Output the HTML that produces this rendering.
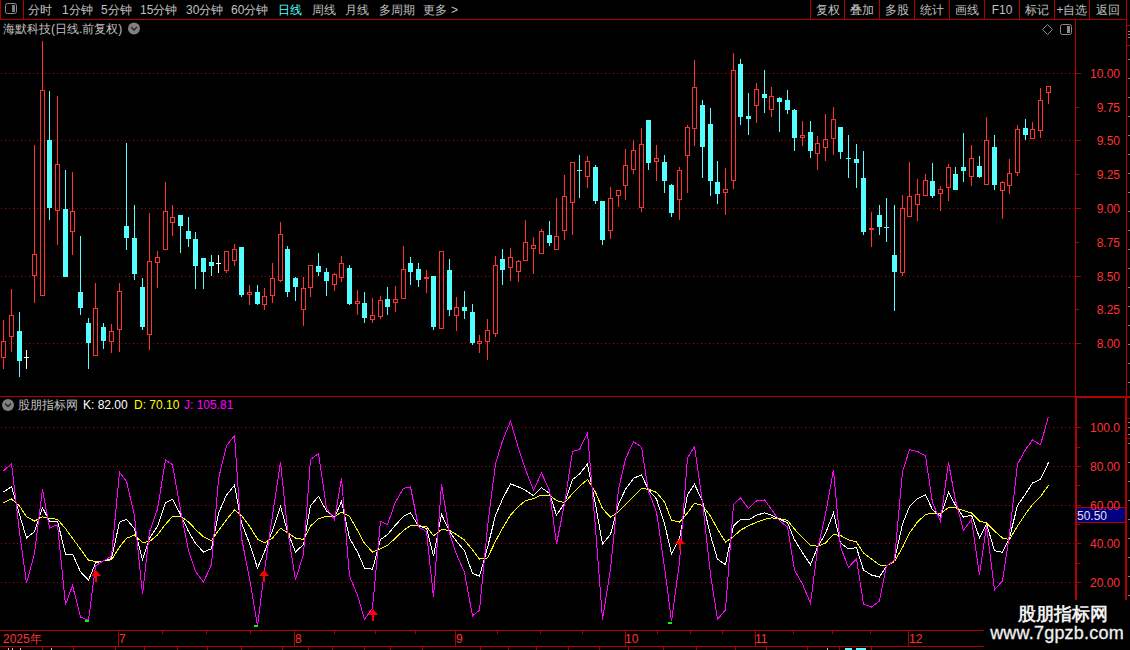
<!DOCTYPE html>
<html><head><meta charset="utf-8">
<style>
html,body{margin:0;padding:0;background:#000;width:1130px;height:650px;overflow:hidden;}
svg{display:block;}
#wm{position:absolute;left:984px;top:600px;width:146px;height:50px;background:#000;}
#wm .a{position:absolute;left:6px;top:2px;width:146px;text-align:center;font:bold 18px "Liberation Sans",sans-serif;color:#f0f0f0;}
#wm .b{position:absolute;left:0;top:23px;letter-spacing:0.2px;width:146px;text-align:center;font:18px "Liberation Sans",sans-serif;color:#f0f0f0;-webkit-text-stroke:0.3px #f0f0f0;}
</style></head>
<body>
<svg width="1130" height="650" viewBox="0 0 1130 650" shape-rendering="crispEdges">
<rect x="0" y="0" width="1130" height="650" fill="#000"/>
<rect x="0" y="19" width="1126" height="1" fill="#b00000"/>
<rect x="0" y="0" width="1" height="19" fill="#b00000"/>
<rect x="23" y="0" width="1" height="19" fill="#b00000"/>
<rect x="810" y="0" width="1" height="19" fill="#b00000"/>
<rect x="844" y="0" width="1" height="19" fill="#b00000"/>
<rect x="879" y="0" width="1" height="19" fill="#b00000"/>
<rect x="914" y="0" width="1" height="19" fill="#b00000"/>
<rect x="949" y="0" width="1" height="19" fill="#b00000"/>
<rect x="984" y="0" width="1" height="19" fill="#b00000"/>
<rect x="1019" y="0" width="1" height="19" fill="#b00000"/>
<rect x="1054" y="0" width="1" height="19" fill="#b00000"/>
<rect x="1089" y="0" width="1" height="19" fill="#b00000"/>
<rect x="1126" y="0" width="1" height="650" fill="#b00000"/>
<rect x="1125" y="397" width="1" height="203" fill="#b00000"/>
<rect x="1075" y="19" width="1" height="377" fill="#b00000"/>
<rect x="1075" y="396" width="2" height="234" fill="#b00000"/>
<rect x="0" y="396" width="1126" height="1" fill="#b00000"/>
<rect x="1076" y="397" width="54" height="1" fill="#b00000"/>
<rect x="1126" y="396" width="4" height="1" fill="#b00000"/>
<rect x="1127" y="418" width="3" height="1" fill="#b00000"/>
<rect x="1127" y="438" width="3" height="1" fill="#b00000"/>
<rect x="1127" y="25" width="3" height="1" fill="#b00000"/>
<rect x="1127" y="45" width="3" height="1" fill="#b00000"/>
<rect x="0" y="630" width="984" height="1" fill="#b00000"/>
<rect x="0" y="646" width="984" height="1" fill="#b00000"/>
<rect x="118" y="630" width="1" height="16" fill="#b00000"/>
<rect x="294" y="630" width="1" height="16" fill="#b00000"/>
<rect x="455" y="630" width="1" height="16" fill="#b00000"/>
<rect x="625" y="630" width="1" height="16" fill="#b00000"/>
<rect x="755" y="630" width="1" height="16" fill="#b00000"/>
<rect x="908" y="630" width="1" height="16" fill="#b00000"/>
<rect x="162" y="631" width="1" height="3" fill="#b00000"/>
<rect x="206" y="631" width="1" height="3" fill="#b00000"/>
<rect x="250" y="631" width="1" height="3" fill="#b00000"/>
<rect x="334" y="631" width="1" height="3" fill="#b00000"/>
<rect x="375" y="631" width="1" height="3" fill="#b00000"/>
<rect x="415" y="631" width="1" height="3" fill="#b00000"/>
<rect x="497" y="631" width="1" height="3" fill="#b00000"/>
<rect x="540" y="631" width="1" height="3" fill="#b00000"/>
<rect x="582" y="631" width="1" height="3" fill="#b00000"/>
<rect x="657" y="631" width="1" height="3" fill="#b00000"/>
<rect x="690" y="631" width="1" height="3" fill="#b00000"/>
<rect x="722" y="631" width="1" height="3" fill="#b00000"/>
<rect x="793" y="631" width="1" height="3" fill="#b00000"/>
<rect x="832" y="631" width="1" height="3" fill="#b00000"/>
<rect x="870" y="631" width="1" height="3" fill="#b00000"/>
<rect x="42" y="647" width="1" height="3" fill="#b00000"/>
<rect x="73" y="647" width="1" height="3" fill="#b00000"/>
<rect x="115" y="647" width="1" height="3" fill="#b00000"/>
<rect x="144" y="647" width="1" height="3" fill="#b00000"/>
<rect x="177" y="647" width="1" height="3" fill="#b00000"/>
<rect x="207" y="647" width="1" height="3" fill="#b00000"/>
<rect x="241" y="647" width="1" height="3" fill="#b00000"/>
<rect x="282" y="647" width="1" height="3" fill="#b00000"/>
<rect x="308" y="647" width="1" height="3" fill="#b00000"/>
<rect x="332" y="647" width="1" height="3" fill="#b00000"/>
<rect x="364" y="647" width="1" height="3" fill="#b00000"/>
<rect x="390" y="647" width="1" height="3" fill="#b00000"/>
<rect x="422" y="647" width="1" height="3" fill="#b00000"/>
<rect x="480" y="647" width="1" height="3" fill="#b00000"/>
<rect x="508" y="647" width="1" height="3" fill="#b00000"/>
<rect x="536" y="647" width="1" height="3" fill="#b00000"/>
<rect x="568" y="647" width="1" height="3" fill="#b00000"/>
<rect x="599" y="647" width="1" height="3" fill="#b00000"/>
<rect x="628" y="647" width="1" height="3" fill="#b00000"/>
<rect x="663" y="647" width="1" height="3" fill="#b00000"/>
<rect x="696" y="647" width="1" height="3" fill="#b00000"/>
<rect x="735" y="647" width="1" height="3" fill="#b00000"/>
<rect x="766" y="647" width="1" height="3" fill="#b00000"/>
<rect x="807" y="647" width="1" height="3" fill="#b00000"/>
<rect x="839" y="647" width="1" height="3" fill="#b00000"/>
<rect x="871" y="647" width="1" height="3" fill="#b00000"/>
<rect x="845" y="648" width="7" height="2" fill="#54ffff"/>
<rect x="856" y="648" width="10" height="2" fill="#54ffff"/>
<rect x="827" y="648" width="1" height="2" fill="#c0c0c0"/>
<rect x="8" y="648" width="1" height="2" fill="#c0c0c0"/>
<rect x="12" y="648" width="1" height="2" fill="#c0c0c0"/>
<rect x="20" y="648" width="1" height="2" fill="#c0c0c0"/>
<rect x="51" y="648" width="1" height="2" fill="#c0c0c0"/>
<line x1="1" y1="73.5" x2="1074" y2="73.5" stroke="#b40000" stroke-width="1" stroke-dasharray="1 3"/>
<rect x="1076" y="73" width="5" height="1" fill="#b00000"/>
<line x1="1" y1="140.5" x2="1074" y2="140.5" stroke="#b40000" stroke-width="1" stroke-dasharray="1 3"/>
<rect x="1076" y="140" width="5" height="1" fill="#b00000"/>
<line x1="1" y1="208.5" x2="1074" y2="208.5" stroke="#b40000" stroke-width="1" stroke-dasharray="1 3"/>
<rect x="1076" y="208" width="5" height="1" fill="#b00000"/>
<line x1="1" y1="276.5" x2="1074" y2="276.5" stroke="#b40000" stroke-width="1" stroke-dasharray="1 3"/>
<rect x="1076" y="276" width="5" height="1" fill="#b00000"/>
<line x1="1" y1="343.5" x2="1074" y2="343.5" stroke="#b40000" stroke-width="1" stroke-dasharray="1 3"/>
<rect x="1076" y="343" width="5" height="1" fill="#b00000"/>
<rect x="1076" y="107" width="3" height="1" fill="#b00000"/>
<rect x="1076" y="174" width="3" height="1" fill="#b00000"/>
<rect x="1076" y="242" width="3" height="1" fill="#b00000"/>
<rect x="1076" y="309" width="3" height="1" fill="#b00000"/>
<line x1="1" y1="427.5" x2="1074" y2="427.5" stroke="#b40000" stroke-width="1" stroke-dasharray="1 3"/>
<rect x="1077" y="427" width="4" height="1" fill="#b00000"/>
<line x1="1" y1="466.5" x2="1074" y2="466.5" stroke="#b40000" stroke-width="1" stroke-dasharray="1 3"/>
<rect x="1077" y="466" width="4" height="1" fill="#b00000"/>
<line x1="1" y1="505.5" x2="1074" y2="505.5" stroke="#b40000" stroke-width="1" stroke-dasharray="1 3"/>
<rect x="1077" y="505" width="4" height="1" fill="#b00000"/>
<line x1="1" y1="543.5" x2="1074" y2="543.5" stroke="#b40000" stroke-width="1" stroke-dasharray="1 3"/>
<rect x="1077" y="543" width="4" height="1" fill="#b00000"/>
<line x1="1" y1="582.5" x2="1074" y2="582.5" stroke="#b40000" stroke-width="1" stroke-dasharray="1 3"/>
<rect x="1077" y="582" width="4" height="1" fill="#b00000"/>
<rect x="1077" y="447" width="3" height="1" fill="#b00000"/>
<rect x="1077" y="485" width="3" height="1" fill="#b00000"/>
<rect x="1077" y="524" width="3" height="1" fill="#b00000"/>
<rect x="1077" y="563" width="3" height="1" fill="#b00000"/>
<rect x="1128" y="31" width="2" height="1" fill="#808080"/>
<rect x="1128" y="34" width="2" height="1" fill="#808080"/>
<rect x="1128" y="37" width="2" height="1" fill="#808080"/>
<rect x="1128" y="59" width="2" height="1" fill="#808080"/>
<rect x="1128" y="78" width="2" height="1" fill="#808080"/>
<rect x="1128" y="97" width="2" height="1" fill="#808080"/>
<rect x="1128" y="116" width="2" height="1" fill="#808080"/>
<rect x="1128" y="135" width="2" height="1" fill="#808080"/>
<rect x="1128" y="154" width="2" height="1" fill="#808080"/>
<rect x="1128" y="173" width="2" height="1" fill="#808080"/>
<rect x="1128" y="192" width="2" height="1" fill="#808080"/>
<rect x="1128" y="211" width="2" height="1" fill="#808080"/>
<rect x="1128" y="230" width="2" height="1" fill="#808080"/>
<rect x="1128" y="249" width="2" height="1" fill="#808080"/>
<rect x="1128" y="268" width="2" height="1" fill="#808080"/>
<rect x="1128" y="287" width="2" height="1" fill="#808080"/>
<rect x="1128" y="306" width="2" height="1" fill="#808080"/>
<rect x="1128" y="325" width="2" height="1" fill="#808080"/>
<rect x="1128" y="344" width="2" height="1" fill="#808080"/>
<rect x="1128" y="363" width="2" height="1" fill="#808080"/>
<rect x="1128" y="382" width="2" height="1" fill="#808080"/>
<rect x="1128" y="422" width="2" height="1" fill="#808080"/>
<rect x="1128" y="427" width="2" height="1" fill="#808080"/>
<rect x="1128" y="434" width="2" height="1" fill="#808080"/>
<rect x="1128" y="443" width="2" height="1" fill="#808080"/>
<rect x="1128" y="462" width="2" height="1" fill="#808080"/>
<rect x="1128" y="481" width="2" height="1" fill="#808080"/>
<rect x="1128" y="500" width="2" height="1" fill="#808080"/>
<rect x="1128" y="519" width="2" height="1" fill="#808080"/>
<rect x="1128" y="538" width="2" height="1" fill="#808080"/>
<rect x="1128" y="557" width="2" height="1" fill="#808080"/>
<rect x="1128" y="576" width="2" height="1" fill="#808080"/>
<rect x="1128" y="595" width="2" height="1" fill="#808080"/>
<rect x="3" y="320" width="1" height="21" fill="#ff3232"/>
<rect x="3" y="358" width="1" height="11" fill="#ff3232"/>
<rect x="1" y="341" width="5" height="1" fill="#ff3232"/>
<rect x="1" y="357" width="5" height="1" fill="#ff3232"/>
<rect x="1" y="341" width="1" height="17" fill="#ff3232"/>
<rect x="5" y="341" width="1" height="17" fill="#ff3232"/>
<rect x="11" y="289" width="1" height="26" fill="#ff3232"/>
<rect x="11" y="337" width="1" height="15" fill="#ff3232"/>
<rect x="9" y="315" width="5" height="1" fill="#ff3232"/>
<rect x="9" y="336" width="5" height="1" fill="#ff3232"/>
<rect x="9" y="315" width="1" height="22" fill="#ff3232"/>
<rect x="13" y="315" width="1" height="22" fill="#ff3232"/>
<rect x="19" y="312" width="1" height="65" fill="#54ffff"/>
<rect x="17" y="331" width="5" height="30" fill="#54ffff"/>
<rect x="26" y="350" width="1" height="19" fill="#ffffff"/>
<rect x="24" y="357" width="5" height="1" fill="#ffffff"/>
<rect x="34" y="145" width="1" height="109" fill="#ff3232"/>
<rect x="34" y="276" width="1" height="27" fill="#ff3232"/>
<rect x="32" y="254" width="5" height="1" fill="#ff3232"/>
<rect x="32" y="275" width="5" height="1" fill="#ff3232"/>
<rect x="32" y="254" width="1" height="22" fill="#ff3232"/>
<rect x="36" y="254" width="1" height="22" fill="#ff3232"/>
<rect x="42" y="41" width="1" height="49" fill="#ff3232"/>
<rect x="40" y="90" width="5" height="1" fill="#ff3232"/>
<rect x="40" y="295" width="5" height="1" fill="#ff3232"/>
<rect x="40" y="90" width="1" height="206" fill="#ff3232"/>
<rect x="44" y="90" width="1" height="206" fill="#ff3232"/>
<rect x="49" y="91" width="1" height="129" fill="#54ffff"/>
<rect x="47" y="140" width="5" height="68" fill="#54ffff"/>
<rect x="57" y="96" width="1" height="68" fill="#ff3232"/>
<rect x="57" y="211" width="1" height="34" fill="#ff3232"/>
<rect x="55" y="164" width="5" height="1" fill="#ff3232"/>
<rect x="55" y="210" width="5" height="1" fill="#ff3232"/>
<rect x="55" y="164" width="1" height="47" fill="#ff3232"/>
<rect x="59" y="164" width="1" height="47" fill="#ff3232"/>
<rect x="65" y="170" width="1" height="107" fill="#54ffff"/>
<rect x="63" y="209" width="5" height="68" fill="#54ffff"/>
<rect x="72" y="172" width="1" height="39" fill="#ff3232"/>
<rect x="72" y="232" width="1" height="23" fill="#ff3232"/>
<rect x="70" y="211" width="5" height="1" fill="#ff3232"/>
<rect x="70" y="231" width="5" height="1" fill="#ff3232"/>
<rect x="70" y="211" width="1" height="21" fill="#ff3232"/>
<rect x="74" y="211" width="1" height="21" fill="#ff3232"/>
<rect x="80" y="236" width="1" height="79" fill="#54ffff"/>
<rect x="78" y="292" width="5" height="16" fill="#54ffff"/>
<rect x="88" y="318" width="1" height="51" fill="#54ffff"/>
<rect x="86" y="323" width="5" height="20" fill="#54ffff"/>
<rect x="95" y="283" width="1" height="25" fill="#ff3232"/>
<rect x="93" y="308" width="5" height="1" fill="#ff3232"/>
<rect x="93" y="355" width="5" height="1" fill="#ff3232"/>
<rect x="93" y="308" width="1" height="48" fill="#ff3232"/>
<rect x="97" y="308" width="1" height="48" fill="#ff3232"/>
<rect x="103" y="323" width="1" height="26" fill="#54ffff"/>
<rect x="101" y="327" width="5" height="14" fill="#54ffff"/>
<rect x="111" y="324" width="1" height="7" fill="#ff3232"/>
<rect x="111" y="342" width="1" height="11" fill="#ff3232"/>
<rect x="109" y="331" width="5" height="1" fill="#ff3232"/>
<rect x="109" y="341" width="5" height="1" fill="#ff3232"/>
<rect x="109" y="331" width="1" height="11" fill="#ff3232"/>
<rect x="113" y="331" width="1" height="11" fill="#ff3232"/>
<rect x="119" y="283" width="1" height="8" fill="#ff3232"/>
<rect x="119" y="330" width="1" height="22" fill="#ff3232"/>
<rect x="117" y="291" width="5" height="1" fill="#ff3232"/>
<rect x="117" y="329" width="5" height="1" fill="#ff3232"/>
<rect x="117" y="291" width="1" height="39" fill="#ff3232"/>
<rect x="121" y="291" width="1" height="39" fill="#ff3232"/>
<rect x="126" y="143" width="1" height="107" fill="#54ffff"/>
<rect x="124" y="226" width="5" height="12" fill="#54ffff"/>
<rect x="134" y="205" width="1" height="75" fill="#54ffff"/>
<rect x="132" y="238" width="5" height="36" fill="#54ffff"/>
<rect x="142" y="278" width="1" height="52" fill="#54ffff"/>
<rect x="140" y="287" width="5" height="40" fill="#54ffff"/>
<rect x="149" y="213" width="1" height="48" fill="#ff3232"/>
<rect x="149" y="335" width="1" height="15" fill="#ff3232"/>
<rect x="147" y="261" width="5" height="1" fill="#ff3232"/>
<rect x="147" y="334" width="5" height="1" fill="#ff3232"/>
<rect x="147" y="261" width="1" height="74" fill="#ff3232"/>
<rect x="151" y="261" width="1" height="74" fill="#ff3232"/>
<rect x="157" y="251" width="1" height="6" fill="#ff3232"/>
<rect x="157" y="263" width="1" height="25" fill="#ff3232"/>
<rect x="155" y="257" width="5" height="1" fill="#ff3232"/>
<rect x="155" y="262" width="5" height="1" fill="#ff3232"/>
<rect x="155" y="257" width="1" height="6" fill="#ff3232"/>
<rect x="159" y="257" width="1" height="6" fill="#ff3232"/>
<rect x="165" y="182" width="1" height="29" fill="#ff3232"/>
<rect x="163" y="211" width="5" height="1" fill="#ff3232"/>
<rect x="163" y="249" width="5" height="1" fill="#ff3232"/>
<rect x="163" y="211" width="1" height="39" fill="#ff3232"/>
<rect x="167" y="211" width="1" height="39" fill="#ff3232"/>
<rect x="172" y="205" width="1" height="12" fill="#ff3232"/>
<rect x="172" y="223" width="1" height="13" fill="#ff3232"/>
<rect x="170" y="217" width="5" height="1" fill="#ff3232"/>
<rect x="170" y="222" width="5" height="1" fill="#ff3232"/>
<rect x="170" y="217" width="1" height="6" fill="#ff3232"/>
<rect x="174" y="217" width="1" height="6" fill="#ff3232"/>
<rect x="180" y="215" width="1" height="38" fill="#54ffff"/>
<rect x="178" y="215" width="5" height="11" fill="#54ffff"/>
<rect x="188" y="217" width="1" height="30" fill="#54ffff"/>
<rect x="186" y="231" width="5" height="8" fill="#54ffff"/>
<rect x="195" y="232" width="1" height="57" fill="#54ffff"/>
<rect x="193" y="239" width="5" height="27" fill="#54ffff"/>
<rect x="203" y="258" width="1" height="31" fill="#54ffff"/>
<rect x="201" y="258" width="5" height="14" fill="#54ffff"/>
<rect x="211" y="255" width="1" height="21" fill="#54ffff"/>
<rect x="209" y="262" width="5" height="4" fill="#54ffff"/>
<rect x="218" y="255" width="1" height="18" fill="#ffffff"/>
<rect x="216" y="263" width="5" height="1" fill="#ffffff"/>
<rect x="226" y="271" width="1" height="2" fill="#ff3232"/>
<rect x="224" y="251" width="5" height="1" fill="#ff3232"/>
<rect x="224" y="270" width="5" height="1" fill="#ff3232"/>
<rect x="224" y="251" width="1" height="20" fill="#ff3232"/>
<rect x="228" y="251" width="1" height="20" fill="#ff3232"/>
<rect x="234" y="244" width="1" height="5" fill="#ff3232"/>
<rect x="234" y="261" width="1" height="5" fill="#ff3232"/>
<rect x="232" y="249" width="5" height="1" fill="#ff3232"/>
<rect x="232" y="260" width="5" height="1" fill="#ff3232"/>
<rect x="232" y="249" width="1" height="12" fill="#ff3232"/>
<rect x="236" y="249" width="1" height="12" fill="#ff3232"/>
<rect x="241" y="247" width="1" height="50" fill="#54ffff"/>
<rect x="239" y="247" width="5" height="48" fill="#54ffff"/>
<rect x="249" y="285" width="1" height="7" fill="#ff3232"/>
<rect x="249" y="295" width="1" height="10" fill="#ff3232"/>
<rect x="247" y="292" width="5" height="1" fill="#ff3232"/>
<rect x="247" y="294" width="5" height="1" fill="#ff3232"/>
<rect x="247" y="292" width="1" height="3" fill="#ff3232"/>
<rect x="251" y="292" width="1" height="3" fill="#ff3232"/>
<rect x="257" y="285" width="1" height="20" fill="#54ffff"/>
<rect x="255" y="292" width="5" height="12" fill="#54ffff"/>
<rect x="264" y="288" width="1" height="8" fill="#ff3232"/>
<rect x="264" y="305" width="1" height="5" fill="#ff3232"/>
<rect x="262" y="296" width="5" height="1" fill="#ff3232"/>
<rect x="262" y="304" width="5" height="1" fill="#ff3232"/>
<rect x="262" y="296" width="1" height="9" fill="#ff3232"/>
<rect x="266" y="296" width="1" height="9" fill="#ff3232"/>
<rect x="272" y="263" width="1" height="15" fill="#ff3232"/>
<rect x="272" y="296" width="1" height="7" fill="#ff3232"/>
<rect x="270" y="278" width="5" height="1" fill="#ff3232"/>
<rect x="270" y="295" width="5" height="1" fill="#ff3232"/>
<rect x="270" y="278" width="1" height="18" fill="#ff3232"/>
<rect x="274" y="278" width="1" height="18" fill="#ff3232"/>
<rect x="280" y="222" width="1" height="12" fill="#ff3232"/>
<rect x="280" y="281" width="1" height="1" fill="#ff3232"/>
<rect x="278" y="234" width="5" height="1" fill="#ff3232"/>
<rect x="278" y="280" width="5" height="1" fill="#ff3232"/>
<rect x="278" y="234" width="1" height="47" fill="#ff3232"/>
<rect x="282" y="234" width="1" height="47" fill="#ff3232"/>
<rect x="287" y="246" width="1" height="51" fill="#54ffff"/>
<rect x="285" y="249" width="5" height="43" fill="#54ffff"/>
<rect x="295" y="277" width="1" height="24" fill="#54ffff"/>
<rect x="293" y="278" width="5" height="9" fill="#54ffff"/>
<rect x="303" y="277" width="1" height="11" fill="#ff3232"/>
<rect x="303" y="310" width="1" height="16" fill="#ff3232"/>
<rect x="301" y="288" width="5" height="1" fill="#ff3232"/>
<rect x="301" y="309" width="5" height="1" fill="#ff3232"/>
<rect x="301" y="288" width="1" height="22" fill="#ff3232"/>
<rect x="305" y="288" width="1" height="22" fill="#ff3232"/>
<rect x="310" y="288" width="1" height="9" fill="#ff3232"/>
<rect x="308" y="265" width="5" height="1" fill="#ff3232"/>
<rect x="308" y="287" width="5" height="1" fill="#ff3232"/>
<rect x="308" y="265" width="1" height="23" fill="#ff3232"/>
<rect x="312" y="265" width="1" height="23" fill="#ff3232"/>
<rect x="318" y="253" width="1" height="23" fill="#54ffff"/>
<rect x="316" y="266" width="5" height="6" fill="#54ffff"/>
<rect x="326" y="268" width="1" height="28" fill="#54ffff"/>
<rect x="324" y="272" width="5" height="9" fill="#54ffff"/>
<rect x="334" y="273" width="1" height="1" fill="#ff3232"/>
<rect x="334" y="285" width="1" height="6" fill="#ff3232"/>
<rect x="332" y="274" width="5" height="1" fill="#ff3232"/>
<rect x="332" y="284" width="5" height="1" fill="#ff3232"/>
<rect x="332" y="274" width="1" height="11" fill="#ff3232"/>
<rect x="336" y="274" width="1" height="11" fill="#ff3232"/>
<rect x="341" y="256" width="1" height="7" fill="#ff3232"/>
<rect x="341" y="278" width="1" height="4" fill="#ff3232"/>
<rect x="339" y="263" width="5" height="1" fill="#ff3232"/>
<rect x="339" y="277" width="5" height="1" fill="#ff3232"/>
<rect x="339" y="263" width="1" height="15" fill="#ff3232"/>
<rect x="343" y="263" width="1" height="15" fill="#ff3232"/>
<rect x="349" y="265" width="1" height="40" fill="#54ffff"/>
<rect x="347" y="268" width="5" height="36" fill="#54ffff"/>
<rect x="357" y="290" width="1" height="11" fill="#ff3232"/>
<rect x="357" y="304" width="1" height="11" fill="#ff3232"/>
<rect x="355" y="301" width="5" height="1" fill="#ff3232"/>
<rect x="355" y="303" width="5" height="1" fill="#ff3232"/>
<rect x="355" y="301" width="1" height="3" fill="#ff3232"/>
<rect x="359" y="301" width="1" height="3" fill="#ff3232"/>
<rect x="364" y="292" width="1" height="31" fill="#54ffff"/>
<rect x="362" y="303" width="5" height="15" fill="#54ffff"/>
<rect x="372" y="298" width="1" height="17" fill="#ff3232"/>
<rect x="372" y="320" width="1" height="3" fill="#ff3232"/>
<rect x="370" y="315" width="5" height="1" fill="#ff3232"/>
<rect x="370" y="319" width="5" height="1" fill="#ff3232"/>
<rect x="370" y="315" width="1" height="5" fill="#ff3232"/>
<rect x="374" y="315" width="1" height="5" fill="#ff3232"/>
<rect x="380" y="296" width="1" height="4" fill="#ff3232"/>
<rect x="380" y="317" width="1" height="2" fill="#ff3232"/>
<rect x="378" y="300" width="5" height="1" fill="#ff3232"/>
<rect x="378" y="316" width="5" height="1" fill="#ff3232"/>
<rect x="378" y="300" width="1" height="17" fill="#ff3232"/>
<rect x="382" y="300" width="1" height="17" fill="#ff3232"/>
<rect x="387" y="287" width="1" height="28" fill="#54ffff"/>
<rect x="385" y="299" width="5" height="8" fill="#54ffff"/>
<rect x="395" y="286" width="1" height="13" fill="#ff3232"/>
<rect x="395" y="303" width="1" height="9" fill="#ff3232"/>
<rect x="393" y="299" width="5" height="1" fill="#ff3232"/>
<rect x="393" y="302" width="5" height="1" fill="#ff3232"/>
<rect x="393" y="299" width="1" height="4" fill="#ff3232"/>
<rect x="397" y="299" width="1" height="4" fill="#ff3232"/>
<rect x="403" y="246" width="1" height="23" fill="#ff3232"/>
<rect x="401" y="269" width="5" height="1" fill="#ff3232"/>
<rect x="401" y="298" width="5" height="1" fill="#ff3232"/>
<rect x="401" y="269" width="1" height="30" fill="#ff3232"/>
<rect x="405" y="269" width="1" height="30" fill="#ff3232"/>
<rect x="410" y="257" width="1" height="28" fill="#54ffff"/>
<rect x="408" y="263" width="5" height="9" fill="#54ffff"/>
<rect x="418" y="263" width="1" height="24" fill="#54ffff"/>
<rect x="416" y="269" width="5" height="11" fill="#54ffff"/>
<rect x="426" y="270" width="1" height="7" fill="#ff3232"/>
<rect x="426" y="279" width="1" height="14" fill="#ff3232"/>
<rect x="424" y="277" width="5" height="1" fill="#ff3232"/>
<rect x="424" y="278" width="5" height="1" fill="#ff3232"/>
<rect x="424" y="277" width="1" height="2" fill="#ff3232"/>
<rect x="428" y="277" width="1" height="2" fill="#ff3232"/>
<rect x="433" y="276" width="1" height="54" fill="#54ffff"/>
<rect x="431" y="276" width="5" height="51" fill="#54ffff"/>
<rect x="439" y="251" width="5" height="1" fill="#ff3232"/>
<rect x="439" y="328" width="5" height="1" fill="#ff3232"/>
<rect x="439" y="251" width="1" height="78" fill="#ff3232"/>
<rect x="443" y="251" width="1" height="78" fill="#ff3232"/>
<rect x="449" y="259" width="1" height="57" fill="#54ffff"/>
<rect x="447" y="270" width="5" height="40" fill="#54ffff"/>
<rect x="456" y="297" width="1" height="10" fill="#ff3232"/>
<rect x="456" y="316" width="1" height="15" fill="#ff3232"/>
<rect x="454" y="307" width="5" height="1" fill="#ff3232"/>
<rect x="454" y="315" width="5" height="1" fill="#ff3232"/>
<rect x="454" y="307" width="1" height="9" fill="#ff3232"/>
<rect x="458" y="307" width="1" height="9" fill="#ff3232"/>
<rect x="464" y="291" width="1" height="28" fill="#54ffff"/>
<rect x="462" y="307" width="5" height="4" fill="#54ffff"/>
<rect x="472" y="304" width="1" height="41" fill="#54ffff"/>
<rect x="470" y="312" width="5" height="31" fill="#54ffff"/>
<rect x="479" y="335" width="1" height="6" fill="#ff3232"/>
<rect x="479" y="344" width="1" height="9" fill="#ff3232"/>
<rect x="477" y="341" width="5" height="1" fill="#ff3232"/>
<rect x="477" y="343" width="5" height="1" fill="#ff3232"/>
<rect x="477" y="341" width="1" height="3" fill="#ff3232"/>
<rect x="481" y="341" width="1" height="3" fill="#ff3232"/>
<rect x="487" y="319" width="1" height="11" fill="#ff3232"/>
<rect x="487" y="342" width="1" height="18" fill="#ff3232"/>
<rect x="485" y="330" width="5" height="1" fill="#ff3232"/>
<rect x="485" y="341" width="5" height="1" fill="#ff3232"/>
<rect x="485" y="330" width="1" height="12" fill="#ff3232"/>
<rect x="489" y="330" width="1" height="12" fill="#ff3232"/>
<rect x="495" y="256" width="1" height="9" fill="#ff3232"/>
<rect x="495" y="334" width="1" height="3" fill="#ff3232"/>
<rect x="493" y="265" width="5" height="1" fill="#ff3232"/>
<rect x="493" y="333" width="5" height="1" fill="#ff3232"/>
<rect x="493" y="265" width="1" height="69" fill="#ff3232"/>
<rect x="497" y="265" width="1" height="69" fill="#ff3232"/>
<rect x="502" y="249" width="1" height="36" fill="#54ffff"/>
<rect x="500" y="259" width="5" height="11" fill="#54ffff"/>
<rect x="510" y="248" width="1" height="9" fill="#ff3232"/>
<rect x="510" y="268" width="1" height="13" fill="#ff3232"/>
<rect x="508" y="257" width="5" height="1" fill="#ff3232"/>
<rect x="508" y="267" width="5" height="1" fill="#ff3232"/>
<rect x="508" y="257" width="1" height="11" fill="#ff3232"/>
<rect x="512" y="257" width="1" height="11" fill="#ff3232"/>
<rect x="518" y="260" width="1" height="1" fill="#ff3232"/>
<rect x="518" y="272" width="1" height="10" fill="#ff3232"/>
<rect x="516" y="261" width="5" height="1" fill="#ff3232"/>
<rect x="516" y="271" width="5" height="1" fill="#ff3232"/>
<rect x="516" y="261" width="1" height="11" fill="#ff3232"/>
<rect x="520" y="261" width="1" height="11" fill="#ff3232"/>
<rect x="525" y="220" width="1" height="22" fill="#ff3232"/>
<rect x="523" y="242" width="5" height="1" fill="#ff3232"/>
<rect x="523" y="260" width="5" height="1" fill="#ff3232"/>
<rect x="523" y="242" width="1" height="19" fill="#ff3232"/>
<rect x="527" y="242" width="1" height="19" fill="#ff3232"/>
<rect x="533" y="237" width="1" height="8" fill="#ff3232"/>
<rect x="533" y="249" width="1" height="25" fill="#ff3232"/>
<rect x="531" y="245" width="5" height="1" fill="#ff3232"/>
<rect x="531" y="248" width="5" height="1" fill="#ff3232"/>
<rect x="531" y="245" width="1" height="4" fill="#ff3232"/>
<rect x="535" y="245" width="1" height="4" fill="#ff3232"/>
<rect x="541" y="229" width="1" height="2" fill="#ff3232"/>
<rect x="539" y="231" width="5" height="1" fill="#ff3232"/>
<rect x="539" y="253" width="5" height="1" fill="#ff3232"/>
<rect x="539" y="231" width="1" height="23" fill="#ff3232"/>
<rect x="543" y="231" width="1" height="23" fill="#ff3232"/>
<rect x="549" y="221" width="1" height="25" fill="#54ffff"/>
<rect x="547" y="235" width="5" height="8" fill="#54ffff"/>
<rect x="556" y="198" width="1" height="38" fill="#ff3232"/>
<rect x="554" y="236" width="5" height="1" fill="#ff3232"/>
<rect x="554" y="249" width="5" height="1" fill="#ff3232"/>
<rect x="554" y="236" width="1" height="14" fill="#ff3232"/>
<rect x="558" y="236" width="1" height="14" fill="#ff3232"/>
<rect x="564" y="175" width="1" height="21" fill="#ff3232"/>
<rect x="564" y="231" width="1" height="9" fill="#ff3232"/>
<rect x="562" y="196" width="5" height="1" fill="#ff3232"/>
<rect x="562" y="230" width="5" height="1" fill="#ff3232"/>
<rect x="562" y="196" width="1" height="35" fill="#ff3232"/>
<rect x="566" y="196" width="1" height="35" fill="#ff3232"/>
<rect x="572" y="203" width="1" height="32" fill="#ff3232"/>
<rect x="570" y="162" width="5" height="1" fill="#ff3232"/>
<rect x="570" y="202" width="5" height="1" fill="#ff3232"/>
<rect x="570" y="162" width="1" height="41" fill="#ff3232"/>
<rect x="574" y="162" width="1" height="41" fill="#ff3232"/>
<rect x="579" y="155" width="1" height="43" fill="#54ffff"/>
<rect x="577" y="170" width="5" height="1" fill="#54ffff"/>
<rect x="587" y="156" width="1" height="5" fill="#ff3232"/>
<rect x="587" y="177" width="1" height="11" fill="#ff3232"/>
<rect x="585" y="161" width="5" height="1" fill="#ff3232"/>
<rect x="585" y="176" width="5" height="1" fill="#ff3232"/>
<rect x="585" y="161" width="1" height="16" fill="#ff3232"/>
<rect x="589" y="161" width="1" height="16" fill="#ff3232"/>
<rect x="595" y="165" width="1" height="39" fill="#54ffff"/>
<rect x="593" y="167" width="5" height="34" fill="#54ffff"/>
<rect x="602" y="201" width="1" height="44" fill="#54ffff"/>
<rect x="600" y="201" width="5" height="39" fill="#54ffff"/>
<rect x="610" y="187" width="1" height="11" fill="#ff3232"/>
<rect x="610" y="231" width="1" height="8" fill="#ff3232"/>
<rect x="608" y="198" width="5" height="1" fill="#ff3232"/>
<rect x="608" y="230" width="5" height="1" fill="#ff3232"/>
<rect x="608" y="198" width="1" height="33" fill="#ff3232"/>
<rect x="612" y="198" width="1" height="33" fill="#ff3232"/>
<rect x="618" y="196" width="1" height="11" fill="#ff3232"/>
<rect x="616" y="190" width="5" height="1" fill="#ff3232"/>
<rect x="616" y="195" width="5" height="1" fill="#ff3232"/>
<rect x="616" y="190" width="1" height="6" fill="#ff3232"/>
<rect x="620" y="190" width="1" height="6" fill="#ff3232"/>
<rect x="625" y="149" width="1" height="16" fill="#ff3232"/>
<rect x="625" y="186" width="1" height="14" fill="#ff3232"/>
<rect x="623" y="165" width="5" height="1" fill="#ff3232"/>
<rect x="623" y="185" width="5" height="1" fill="#ff3232"/>
<rect x="623" y="165" width="1" height="21" fill="#ff3232"/>
<rect x="627" y="165" width="1" height="21" fill="#ff3232"/>
<rect x="633" y="140" width="1" height="10" fill="#ff3232"/>
<rect x="633" y="170" width="1" height="4" fill="#ff3232"/>
<rect x="631" y="150" width="5" height="1" fill="#ff3232"/>
<rect x="631" y="169" width="5" height="1" fill="#ff3232"/>
<rect x="631" y="150" width="1" height="20" fill="#ff3232"/>
<rect x="635" y="150" width="1" height="20" fill="#ff3232"/>
<rect x="641" y="128" width="1" height="16" fill="#ff3232"/>
<rect x="641" y="208" width="1" height="4" fill="#ff3232"/>
<rect x="639" y="144" width="5" height="1" fill="#ff3232"/>
<rect x="639" y="207" width="5" height="1" fill="#ff3232"/>
<rect x="639" y="144" width="1" height="64" fill="#ff3232"/>
<rect x="643" y="144" width="1" height="64" fill="#ff3232"/>
<rect x="648" y="120" width="1" height="50" fill="#54ffff"/>
<rect x="646" y="120" width="5" height="43" fill="#54ffff"/>
<rect x="656" y="145" width="1" height="13" fill="#ff3232"/>
<rect x="656" y="162" width="1" height="19" fill="#ff3232"/>
<rect x="654" y="158" width="5" height="1" fill="#ff3232"/>
<rect x="654" y="161" width="5" height="1" fill="#ff3232"/>
<rect x="654" y="158" width="1" height="4" fill="#ff3232"/>
<rect x="658" y="158" width="1" height="4" fill="#ff3232"/>
<rect x="664" y="155" width="1" height="38" fill="#54ffff"/>
<rect x="662" y="162" width="5" height="19" fill="#54ffff"/>
<rect x="671" y="184" width="1" height="33" fill="#54ffff"/>
<rect x="669" y="185" width="5" height="28" fill="#54ffff"/>
<rect x="679" y="167" width="1" height="3" fill="#ff3232"/>
<rect x="679" y="200" width="1" height="20" fill="#ff3232"/>
<rect x="677" y="170" width="5" height="1" fill="#ff3232"/>
<rect x="677" y="199" width="5" height="1" fill="#ff3232"/>
<rect x="677" y="170" width="1" height="30" fill="#ff3232"/>
<rect x="681" y="170" width="1" height="30" fill="#ff3232"/>
<rect x="687" y="125" width="1" height="2" fill="#ff3232"/>
<rect x="687" y="156" width="1" height="37" fill="#ff3232"/>
<rect x="685" y="127" width="5" height="1" fill="#ff3232"/>
<rect x="685" y="155" width="5" height="1" fill="#ff3232"/>
<rect x="685" y="127" width="1" height="29" fill="#ff3232"/>
<rect x="689" y="127" width="1" height="29" fill="#ff3232"/>
<rect x="694" y="60" width="1" height="27" fill="#ff3232"/>
<rect x="694" y="129" width="1" height="17" fill="#ff3232"/>
<rect x="692" y="87" width="5" height="1" fill="#ff3232"/>
<rect x="692" y="128" width="5" height="1" fill="#ff3232"/>
<rect x="692" y="87" width="1" height="42" fill="#ff3232"/>
<rect x="696" y="87" width="1" height="42" fill="#ff3232"/>
<rect x="702" y="100" width="1" height="78" fill="#54ffff"/>
<rect x="700" y="105" width="5" height="42" fill="#54ffff"/>
<rect x="710" y="108" width="1" height="88" fill="#54ffff"/>
<rect x="708" y="124" width="5" height="57" fill="#54ffff"/>
<rect x="717" y="161" width="1" height="43" fill="#54ffff"/>
<rect x="715" y="182" width="5" height="12" fill="#54ffff"/>
<rect x="725" y="168" width="1" height="21" fill="#ff3232"/>
<rect x="725" y="193" width="1" height="22" fill="#ff3232"/>
<rect x="723" y="189" width="5" height="1" fill="#ff3232"/>
<rect x="723" y="192" width="5" height="1" fill="#ff3232"/>
<rect x="723" y="189" width="1" height="4" fill="#ff3232"/>
<rect x="727" y="189" width="1" height="4" fill="#ff3232"/>
<rect x="733" y="53" width="1" height="17" fill="#ff3232"/>
<rect x="733" y="181" width="1" height="8" fill="#ff3232"/>
<rect x="731" y="70" width="5" height="1" fill="#ff3232"/>
<rect x="731" y="180" width="5" height="1" fill="#ff3232"/>
<rect x="731" y="70" width="1" height="111" fill="#ff3232"/>
<rect x="735" y="70" width="1" height="111" fill="#ff3232"/>
<rect x="740" y="59" width="1" height="66" fill="#54ffff"/>
<rect x="738" y="64" width="5" height="53" fill="#54ffff"/>
<rect x="748" y="93" width="1" height="42" fill="#54ffff"/>
<rect x="746" y="116" width="5" height="3" fill="#54ffff"/>
<rect x="756" y="83" width="1" height="6" fill="#ff3232"/>
<rect x="756" y="106" width="1" height="17" fill="#ff3232"/>
<rect x="754" y="89" width="5" height="1" fill="#ff3232"/>
<rect x="754" y="105" width="5" height="1" fill="#ff3232"/>
<rect x="754" y="89" width="1" height="17" fill="#ff3232"/>
<rect x="758" y="89" width="1" height="17" fill="#ff3232"/>
<rect x="764" y="70" width="1" height="43" fill="#54ffff"/>
<rect x="762" y="94" width="5" height="4" fill="#54ffff"/>
<rect x="771" y="87" width="1" height="9" fill="#ff3232"/>
<rect x="771" y="110" width="1" height="7" fill="#ff3232"/>
<rect x="769" y="96" width="5" height="1" fill="#ff3232"/>
<rect x="769" y="109" width="5" height="1" fill="#ff3232"/>
<rect x="769" y="96" width="1" height="14" fill="#ff3232"/>
<rect x="773" y="96" width="1" height="14" fill="#ff3232"/>
<rect x="779" y="97" width="1" height="35" fill="#54ffff"/>
<rect x="777" y="98" width="5" height="4" fill="#54ffff"/>
<rect x="787" y="90" width="1" height="24" fill="#54ffff"/>
<rect x="785" y="100" width="5" height="10" fill="#54ffff"/>
<rect x="794" y="109" width="1" height="42" fill="#54ffff"/>
<rect x="792" y="110" width="5" height="28" fill="#54ffff"/>
<rect x="802" y="121" width="1" height="14" fill="#ff3232"/>
<rect x="802" y="138" width="1" height="8" fill="#ff3232"/>
<rect x="800" y="135" width="5" height="1" fill="#ff3232"/>
<rect x="800" y="137" width="5" height="1" fill="#ff3232"/>
<rect x="800" y="135" width="1" height="3" fill="#ff3232"/>
<rect x="804" y="135" width="1" height="3" fill="#ff3232"/>
<rect x="810" y="121" width="1" height="37" fill="#54ffff"/>
<rect x="808" y="132" width="5" height="19" fill="#54ffff"/>
<rect x="817" y="136" width="1" height="7" fill="#ff3232"/>
<rect x="817" y="154" width="1" height="16" fill="#ff3232"/>
<rect x="815" y="143" width="5" height="1" fill="#ff3232"/>
<rect x="815" y="153" width="5" height="1" fill="#ff3232"/>
<rect x="815" y="143" width="1" height="11" fill="#ff3232"/>
<rect x="819" y="143" width="1" height="11" fill="#ff3232"/>
<rect x="825" y="114" width="1" height="25" fill="#ff3232"/>
<rect x="825" y="148" width="1" height="13" fill="#ff3232"/>
<rect x="823" y="139" width="5" height="1" fill="#ff3232"/>
<rect x="823" y="147" width="5" height="1" fill="#ff3232"/>
<rect x="823" y="139" width="1" height="9" fill="#ff3232"/>
<rect x="827" y="139" width="1" height="9" fill="#ff3232"/>
<rect x="833" y="107" width="1" height="12" fill="#ff3232"/>
<rect x="833" y="139" width="1" height="16" fill="#ff3232"/>
<rect x="831" y="119" width="5" height="1" fill="#ff3232"/>
<rect x="831" y="138" width="5" height="1" fill="#ff3232"/>
<rect x="831" y="119" width="1" height="20" fill="#ff3232"/>
<rect x="835" y="119" width="1" height="20" fill="#ff3232"/>
<rect x="840" y="127" width="1" height="32" fill="#54ffff"/>
<rect x="838" y="127" width="5" height="25" fill="#54ffff"/>
<rect x="848" y="135" width="1" height="43" fill="#54ffff"/>
<rect x="846" y="158" width="5" height="1" fill="#54ffff"/>
<rect x="856" y="144" width="1" height="44" fill="#54ffff"/>
<rect x="854" y="159" width="5" height="4" fill="#54ffff"/>
<rect x="863" y="151" width="1" height="84" fill="#54ffff"/>
<rect x="861" y="178" width="5" height="54" fill="#54ffff"/>
<rect x="871" y="212" width="1" height="16" fill="#ff3232"/>
<rect x="871" y="230" width="1" height="17" fill="#ff3232"/>
<rect x="869" y="228" width="5" height="1" fill="#ff3232"/>
<rect x="869" y="229" width="5" height="1" fill="#ff3232"/>
<rect x="869" y="228" width="1" height="2" fill="#ff3232"/>
<rect x="873" y="228" width="1" height="2" fill="#ff3232"/>
<rect x="879" y="205" width="1" height="30" fill="#54ffff"/>
<rect x="877" y="215" width="5" height="12" fill="#54ffff"/>
<rect x="886" y="198" width="1" height="44" fill="#54ffff"/>
<rect x="884" y="227" width="5" height="1" fill="#54ffff"/>
<rect x="894" y="205" width="1" height="106" fill="#54ffff"/>
<rect x="892" y="255" width="5" height="17" fill="#54ffff"/>
<rect x="902" y="195" width="1" height="13" fill="#ff3232"/>
<rect x="902" y="273" width="1" height="3" fill="#ff3232"/>
<rect x="900" y="208" width="5" height="1" fill="#ff3232"/>
<rect x="900" y="272" width="5" height="1" fill="#ff3232"/>
<rect x="900" y="208" width="1" height="65" fill="#ff3232"/>
<rect x="904" y="208" width="1" height="65" fill="#ff3232"/>
<rect x="909" y="162" width="1" height="34" fill="#ff3232"/>
<rect x="907" y="196" width="5" height="1" fill="#ff3232"/>
<rect x="907" y="216" width="5" height="1" fill="#ff3232"/>
<rect x="907" y="196" width="1" height="21" fill="#ff3232"/>
<rect x="911" y="196" width="1" height="21" fill="#ff3232"/>
<rect x="917" y="179" width="1" height="15" fill="#ff3232"/>
<rect x="917" y="205" width="1" height="16" fill="#ff3232"/>
<rect x="915" y="194" width="5" height="1" fill="#ff3232"/>
<rect x="915" y="204" width="5" height="1" fill="#ff3232"/>
<rect x="915" y="194" width="1" height="11" fill="#ff3232"/>
<rect x="919" y="194" width="1" height="11" fill="#ff3232"/>
<rect x="925" y="174" width="1" height="6" fill="#ff3232"/>
<rect x="923" y="180" width="5" height="1" fill="#ff3232"/>
<rect x="923" y="195" width="5" height="1" fill="#ff3232"/>
<rect x="923" y="180" width="1" height="16" fill="#ff3232"/>
<rect x="927" y="180" width="1" height="16" fill="#ff3232"/>
<rect x="932" y="163" width="1" height="35" fill="#54ffff"/>
<rect x="930" y="181" width="5" height="15" fill="#54ffff"/>
<rect x="940" y="186" width="1" height="3" fill="#ff3232"/>
<rect x="940" y="194" width="1" height="17" fill="#ff3232"/>
<rect x="938" y="189" width="5" height="1" fill="#ff3232"/>
<rect x="938" y="193" width="5" height="1" fill="#ff3232"/>
<rect x="938" y="189" width="1" height="5" fill="#ff3232"/>
<rect x="942" y="189" width="1" height="5" fill="#ff3232"/>
<rect x="948" y="164" width="1" height="3" fill="#ff3232"/>
<rect x="948" y="188" width="1" height="13" fill="#ff3232"/>
<rect x="946" y="167" width="5" height="1" fill="#ff3232"/>
<rect x="946" y="187" width="5" height="1" fill="#ff3232"/>
<rect x="946" y="167" width="1" height="21" fill="#ff3232"/>
<rect x="950" y="167" width="1" height="21" fill="#ff3232"/>
<rect x="955" y="167" width="1" height="23" fill="#54ffff"/>
<rect x="953" y="174" width="5" height="16" fill="#54ffff"/>
<rect x="963" y="133" width="1" height="49" fill="#54ffff"/>
<rect x="961" y="167" width="5" height="4" fill="#54ffff"/>
<rect x="971" y="145" width="1" height="13" fill="#ff3232"/>
<rect x="971" y="177" width="1" height="9" fill="#ff3232"/>
<rect x="969" y="158" width="5" height="1" fill="#ff3232"/>
<rect x="969" y="176" width="5" height="1" fill="#ff3232"/>
<rect x="969" y="158" width="1" height="19" fill="#ff3232"/>
<rect x="973" y="158" width="1" height="19" fill="#ff3232"/>
<rect x="979" y="156" width="1" height="22" fill="#54ffff"/>
<rect x="977" y="166" width="5" height="11" fill="#54ffff"/>
<rect x="986" y="117" width="1" height="23" fill="#ff3232"/>
<rect x="984" y="140" width="5" height="1" fill="#ff3232"/>
<rect x="984" y="184" width="5" height="1" fill="#ff3232"/>
<rect x="984" y="140" width="1" height="45" fill="#ff3232"/>
<rect x="988" y="140" width="1" height="45" fill="#ff3232"/>
<rect x="994" y="135" width="1" height="55" fill="#54ffff"/>
<rect x="992" y="147" width="5" height="38" fill="#54ffff"/>
<rect x="1002" y="181" width="1" height="1" fill="#ff3232"/>
<rect x="1002" y="191" width="1" height="28" fill="#ff3232"/>
<rect x="1000" y="182" width="5" height="1" fill="#ff3232"/>
<rect x="1000" y="190" width="5" height="1" fill="#ff3232"/>
<rect x="1000" y="182" width="1" height="9" fill="#ff3232"/>
<rect x="1004" y="182" width="1" height="9" fill="#ff3232"/>
<rect x="1009" y="159" width="1" height="14" fill="#ff3232"/>
<rect x="1009" y="186" width="1" height="8" fill="#ff3232"/>
<rect x="1007" y="173" width="5" height="1" fill="#ff3232"/>
<rect x="1007" y="185" width="5" height="1" fill="#ff3232"/>
<rect x="1007" y="173" width="1" height="13" fill="#ff3232"/>
<rect x="1011" y="173" width="1" height="13" fill="#ff3232"/>
<rect x="1017" y="125" width="1" height="4" fill="#ff3232"/>
<rect x="1017" y="173" width="1" height="3" fill="#ff3232"/>
<rect x="1015" y="129" width="5" height="1" fill="#ff3232"/>
<rect x="1015" y="172" width="5" height="1" fill="#ff3232"/>
<rect x="1015" y="129" width="1" height="44" fill="#ff3232"/>
<rect x="1019" y="129" width="1" height="44" fill="#ff3232"/>
<rect x="1025" y="119" width="1" height="21" fill="#54ffff"/>
<rect x="1023" y="128" width="5" height="7" fill="#54ffff"/>
<rect x="1032" y="122" width="1" height="7" fill="#ff3232"/>
<rect x="1030" y="129" width="5" height="1" fill="#ff3232"/>
<rect x="1030" y="138" width="5" height="1" fill="#ff3232"/>
<rect x="1030" y="129" width="1" height="10" fill="#ff3232"/>
<rect x="1034" y="129" width="1" height="10" fill="#ff3232"/>
<rect x="1040" y="88" width="1" height="12" fill="#ff3232"/>
<rect x="1040" y="131" width="1" height="7" fill="#ff3232"/>
<rect x="1038" y="100" width="5" height="1" fill="#ff3232"/>
<rect x="1038" y="130" width="5" height="1" fill="#ff3232"/>
<rect x="1038" y="100" width="1" height="31" fill="#ff3232"/>
<rect x="1042" y="100" width="1" height="31" fill="#ff3232"/>
<rect x="1048" y="93" width="1" height="11" fill="#ff3232"/>
<rect x="1046" y="86" width="5" height="1" fill="#ff3232"/>
<rect x="1046" y="92" width="5" height="1" fill="#ff3232"/>
<rect x="1046" y="86" width="1" height="7" fill="#ff3232"/>
<rect x="1050" y="86" width="1" height="7" fill="#ff3232"/>
<polyline points="3.5,502.8 11.5,499.0 19.5,506.0 26.5,516.8 34.5,521.0 42.5,516.8 49.5,518.5 57.5,519.3 65.5,528.6 72.5,538.3 80.5,549.0 88.5,560.3 95.5,561.5 103.5,561.0 111.5,559.8 119.5,547.0 126.5,538.3 134.5,535.0 142.5,542.6 149.5,541.5 157.5,535.0 165.5,524.3 172.5,516.4 180.5,516.4 188.5,521.8 195.5,529.4 203.5,536.9 211.5,540.8 218.5,530.4 226.5,519.7 234.5,510.0 241.5,515.4 249.5,526.1 257.5,539.0 264.5,542.9 272.5,538.0 280.5,528.3 287.5,532.6 295.5,538.0 303.5,539.5 310.5,526.1 318.5,518.6 326.5,516.4 334.5,516.4 341.5,512.1 349.5,516.4 357.5,530.4 364.5,543.4 372.5,552.0 380.5,548.7 387.5,545.5 395.5,538.0 403.5,530.4 410.5,525.7 418.5,525.7 426.5,526.6 433.5,535.8 441.5,529.4 449.5,530.4 456.5,534.7 464.5,540.1 472.5,549.8 479.5,559.1 487.5,558.0 495.5,541.2 502.5,528.3 510.5,515.1 518.5,506.4 525.5,500.6 533.5,498.5 541.5,495.0 549.5,495.0 556.5,500.6 564.5,502.8 572.5,493.5 579.5,486.4 587.5,479.5 595.5,492.4 602.5,508.6 610.5,517.2 618.5,511.8 625.5,504.3 633.5,496.8 641.5,488.6 648.5,489.2 656.5,492.4 664.5,502.1 671.5,520.0 679.5,522.2 687.5,512.9 694.5,503.2 702.5,505.4 710.5,516.1 717.5,529.1 725.5,542.0 733.5,536.6 740.5,530.1 748.5,525.8 756.5,522.2 764.5,519.4 771.5,517.9 779.5,518.7 787.5,520.4 794.5,529.1 802.5,537.7 810.5,545.2 817.5,546.3 825.5,543.0 833.5,534.4 840.5,535.5 848.5,539.8 856.5,542.0 863.5,553.0 871.5,559.0 879.5,565.0 886.5,566.0 894.5,561.5 902.5,547.5 909.5,533.0 917.5,522.0 925.5,514.5 932.5,513.2 940.5,513.5 948.5,507.5 955.5,507.8 963.5,510.6 971.5,513.0 979.5,521.2 986.5,522.8 994.5,531.0 1002.5,538.0 1009.5,539.6 1017.5,526.0 1025.5,514.0 1032.5,504.5 1040.5,496.5 1048.5,485.4" fill="none" stroke="#ffff00" stroke-width="1"/>
<polyline points="3.5,492.0 11.5,486.6 19.5,514.6 26.5,537.9 34.5,531.8 42.5,507.7 49.5,521.1 57.5,521.1 65.5,554.0 72.5,554.0 80.5,571.7 88.5,580.3 95.5,563.0 103.5,560.9 111.5,558.7 119.5,522.1 126.5,519.3 134.5,528.6 142.5,559.8 149.5,538.3 157.5,526.4 165.5,502.8 172.5,499.2 180.5,514.3 188.5,531.5 195.5,543.4 203.5,552.0 211.5,548.7 218.5,513.2 226.5,495.0 234.5,485.2 241.5,522.9 249.5,543.4 257.5,568.1 264.5,552.0 272.5,530.4 280.5,506.3 287.5,531.5 295.5,552.0 303.5,544.4 310.5,505.7 318.5,496.4 326.5,511.0 334.5,517.5 341.5,501.4 349.5,538.0 357.5,552.0 364.5,568.1 372.5,569.2 380.5,539.5 387.5,534.7 395.5,525.1 403.5,516.4 410.5,512.8 418.5,526.1 426.5,528.3 433.5,556.3 441.5,514.3 449.5,531.5 456.5,541.2 464.5,550.9 472.5,573.5 479.5,576.1 487.5,547.7 495.5,515.4 502.5,499.2 510.5,483.8 518.5,487.0 525.5,490.3 533.5,495.7 541.5,487.7 549.5,493.5 556.5,515.1 564.5,503.2 572.5,479.5 579.5,474.1 587.5,464.0 595.5,504.3 602.5,544.1 610.5,534.4 618.5,504.3 625.5,489.2 633.5,478.4 641.5,474.8 648.5,489.9 656.5,498.9 664.5,523.7 671.5,553.8 679.5,538.7 687.5,494.6 694.5,484.3 702.5,501.1 710.5,535.5 717.5,559.2 725.5,564.6 733.5,525.8 740.5,519.4 748.5,520.0 756.5,515.1 764.5,512.9 771.5,515.1 779.5,519.4 787.5,522.6 794.5,539.8 802.5,552.7 810.5,564.6 817.5,547.4 825.5,533.4 833.5,512.9 840.5,543.0 848.5,549.0 856.5,547.6 863.5,570.0 871.5,575.0 879.5,577.0 886.5,566.0 894.5,560.0 902.5,524.0 909.5,506.4 917.5,498.5 925.5,495.0 932.5,509.7 940.5,516.1 948.5,492.4 955.5,505.4 963.5,517.2 971.5,515.1 979.5,537.7 986.5,523.7 994.5,550.6 1002.5,552.3 1009.5,537.7 1017.5,505.4 1025.5,494.0 1032.5,483.0 1040.5,479.3 1048.5,462.5" fill="none" stroke="#ffffff" stroke-width="1"/>
<polyline points="3.5,471.0 11.5,463.5 19.5,531.8 26.5,583.4 34.5,553.4 42.5,489.5 49.5,528.0 57.5,524.7 65.5,604.8 72.5,585.4 80.5,617.1 88.5,620.3 95.5,566.0 103.5,560.7 111.5,556.5 119.5,472.3 126.5,481.3 134.5,515.8 142.5,594.2 149.5,531.9 157.5,509.2 165.5,459.8 172.5,464.8 180.5,510.1 188.5,550.9 195.5,571.4 203.5,582.2 211.5,564.5 218.5,478.8 226.5,445.6 234.5,435.6 241.5,537.9 249.5,578.0 257.5,626.3 264.5,570.2 272.5,515.2 280.5,462.3 287.5,529.3 295.5,580.0 303.5,554.2 310.5,459.5 318.5,453.5 326.5,508.0 334.5,519.7 341.5,478.0 349.5,576.0 357.5,595.2 364.5,619.5 372.5,608.0 380.5,521.1 387.5,524.6 395.5,502.0 403.5,488.4 410.5,487.0 418.5,526.9 426.5,531.7 433.5,597.3 441.5,484.1 449.5,533.7 456.5,554.2 464.5,572.5 472.5,616.0 479.5,610.1 487.5,527.1 495.5,463.8 502.5,441.0 510.5,421.2 518.5,448.2 525.5,469.7 533.5,490.1 541.5,473.1 549.5,490.5 556.5,544.1 564.5,504.0 572.5,451.5 579.5,449.5 587.5,433.0 595.5,528.1 602.5,619.5 610.5,568.8 618.5,489.3 625.5,459.0 633.5,441.6 641.5,447.2 648.5,491.3 656.5,511.9 664.5,566.9 671.5,621.4 679.5,562.0 687.5,458.0 694.5,446.5 702.5,502.0 710.5,574.3 717.5,619.4 725.5,609.8 733.5,504.2 740.5,498.0 748.5,508.4 756.5,500.9 764.5,499.9 771.5,509.5 779.5,520.8 787.5,527.0 794.5,570.0 802.5,584.0 810.5,603.4 817.5,549.6 825.5,514.2 833.5,469.9 840.5,547.0 848.5,567.4 856.5,558.8 863.5,604.0 871.5,607.0 879.5,601.0 886.5,566.0 894.5,560.0 902.5,472.0 909.5,449.6 917.5,451.5 925.5,456.0 932.5,502.7 940.5,521.3 948.5,462.2 955.5,500.6 963.5,530.4 971.5,519.3 979.5,575.0 986.5,525.5 994.5,589.8 1002.5,580.9 1009.5,533.9 1017.5,464.2 1025.5,449.6 1032.5,440.0 1040.5,444.9 1048.5,416.7" fill="none" stroke="#ff00ff" stroke-width="1"/>
<rect x="85" y="620" width="4" height="2" fill="#00ff00"/>
<rect x="254" y="625" width="4" height="2" fill="#00ff00"/>
<rect x="668" y="622" width="4" height="2" fill="#00ff00"/>
<polygon points="96,570 91,576 101,576" fill="#ff0000" shape-rendering="auto"/>
<rect x="95" y="576" width="2" height="6" fill="#ff0000"/>
<polygon points="264,570 259,576 269,576" fill="#ff0000" shape-rendering="auto"/>
<rect x="263" y="576" width="2" height="6" fill="#ff0000"/>
<polygon points="373,609 368,615 378,615" fill="#ff0000" shape-rendering="auto"/>
<rect x="372" y="615" width="2" height="6" fill="#ff0000"/>
<polygon points="680,538 675,544 685,544" fill="#ff0000" shape-rendering="auto"/>
<rect x="679" y="544" width="2" height="6" fill="#ff0000"/>
<rect x="1076" y="507" width="50" height="16" fill="#b00000"/>
<rect x="1077" y="508" width="48" height="14" fill="#000080"/>
<g shape-rendering="auto">
<rect x="5.5" y="3.5" width="11" height="10" rx="2" fill="none" stroke="#8c8c8c"/>
<rect x="12" y="5" width="3" height="7" fill="#808080"/>
<circle cx="134" cy="28.5" r="6" fill="#808080"/>
<polyline points="131,27 134,30 137,27" fill="none" stroke="#202020" stroke-width="1.3"/>
<circle cx="8" cy="405" r="6" fill="#808080"/>
<polyline points="5,403.5 8,406.5 11,403.5" fill="none" stroke="#202020" stroke-width="1.3"/>
<polygon points="1047.5,24.5 1052.5,29.5 1047.5,34.5 1042.5,29.5" fill="none" stroke="#8c8c8c"/>
<rect x="1060.5" y="24.5" width="11" height="10" rx="2" fill="none" stroke="#8c8c8c"/>
<rect x="1067" y="26" width="3" height="7" fill="#8c8c8c"/>
</g>
<g shape-rendering="auto">
<text x="28" y="14" fill="#c0c0c0" font-size="12" text-anchor="start" font-weight="normal" font-family='"Liberation Sans", sans-serif'>分时</text>
<text x="62" y="14" fill="#c0c0c0" font-size="12" text-anchor="start" font-weight="normal" font-family='"Liberation Sans", sans-serif'>1分钟</text>
<text x="101" y="14" fill="#c0c0c0" font-size="12" text-anchor="start" font-weight="normal" font-family='"Liberation Sans", sans-serif'>5分钟</text>
<text x="140" y="14" fill="#c0c0c0" font-size="12" text-anchor="start" font-weight="normal" font-family='"Liberation Sans", sans-serif'>15分钟</text>
<text x="186" y="14" fill="#c0c0c0" font-size="12" text-anchor="start" font-weight="normal" font-family='"Liberation Sans", sans-serif'>30分钟</text>
<text x="231" y="14" fill="#c0c0c0" font-size="12" text-anchor="start" font-weight="normal" font-family='"Liberation Sans", sans-serif'>60分钟</text>
<text x="278" y="14" fill="#54ffff" font-size="12" text-anchor="start" font-weight="normal" font-family='"Liberation Sans", sans-serif'>日线</text>
<text x="312" y="14" fill="#c0c0c0" font-size="12" text-anchor="start" font-weight="normal" font-family='"Liberation Sans", sans-serif'>周线</text>
<text x="345" y="14" fill="#c0c0c0" font-size="12" text-anchor="start" font-weight="normal" font-family='"Liberation Sans", sans-serif'>月线</text>
<text x="379" y="14" fill="#c0c0c0" font-size="12" text-anchor="start" font-weight="normal" font-family='"Liberation Sans", sans-serif'>多周期</text>
<text x="423" y="14" fill="#c0c0c0" font-size="12" text-anchor="start" font-weight="normal" font-family='"Liberation Sans", sans-serif'>更多</text>
<text x="451" y="14" fill="#c0c0c0" font-size="12" text-anchor="start" font-weight="normal" font-family='"Liberation Sans", sans-serif'>&gt;</text>
<text x="827.5" y="14" fill="#c0c0c0" font-size="12" text-anchor="middle" font-weight="normal" font-family='"Liberation Sans", sans-serif'>复权</text>
<text x="862.0" y="14" fill="#c0c0c0" font-size="12" text-anchor="middle" font-weight="normal" font-family='"Liberation Sans", sans-serif'>叠加</text>
<text x="897.0" y="14" fill="#c0c0c0" font-size="12" text-anchor="middle" font-weight="normal" font-family='"Liberation Sans", sans-serif'>多股</text>
<text x="932.0" y="14" fill="#c0c0c0" font-size="12" text-anchor="middle" font-weight="normal" font-family='"Liberation Sans", sans-serif'>统计</text>
<text x="967.0" y="14" fill="#c0c0c0" font-size="12" text-anchor="middle" font-weight="normal" font-family='"Liberation Sans", sans-serif'>画线</text>
<text x="1002.0" y="14" fill="#c0c0c0" font-size="12" text-anchor="middle" font-weight="normal" font-family='"Liberation Sans", sans-serif'>F10</text>
<text x="1037.0" y="14" fill="#c0c0c0" font-size="12" text-anchor="middle" font-weight="normal" font-family='"Liberation Sans", sans-serif'>标记</text>
<text x="1072.0" y="14" fill="#c0c0c0" font-size="12" text-anchor="middle" font-weight="normal" font-family='"Liberation Sans", sans-serif'>+自选</text>
<text x="1108.0" y="14" fill="#c0c0c0" font-size="12" text-anchor="middle" font-weight="normal" font-family='"Liberation Sans", sans-serif'>返回</text>
<text x="3" y="33" fill="#c0c0c0" font-size="12" text-anchor="start" font-weight="normal" font-family='"Liberation Sans", sans-serif'>海默科技(日线.前复权)</text>
<text x="1120" y="78" fill="#ff3232" font-size="12" text-anchor="end" font-weight="normal" font-family='"Liberation Sans", sans-serif'>10.00</text>
<text x="1120" y="112" fill="#ff3232" font-size="12" text-anchor="end" font-weight="normal" font-family='"Liberation Sans", sans-serif'>9.75</text>
<text x="1120" y="145" fill="#ff3232" font-size="12" text-anchor="end" font-weight="normal" font-family='"Liberation Sans", sans-serif'>9.50</text>
<text x="1120" y="179" fill="#ff3232" font-size="12" text-anchor="end" font-weight="normal" font-family='"Liberation Sans", sans-serif'>9.25</text>
<text x="1120" y="213" fill="#ff3232" font-size="12" text-anchor="end" font-weight="normal" font-family='"Liberation Sans", sans-serif'>9.00</text>
<text x="1120" y="247" fill="#ff3232" font-size="12" text-anchor="end" font-weight="normal" font-family='"Liberation Sans", sans-serif'>8.75</text>
<text x="1120" y="281" fill="#ff3232" font-size="12" text-anchor="end" font-weight="normal" font-family='"Liberation Sans", sans-serif'>8.50</text>
<text x="1120" y="314" fill="#ff3232" font-size="12" text-anchor="end" font-weight="normal" font-family='"Liberation Sans", sans-serif'>8.25</text>
<text x="1120" y="348" fill="#ff3232" font-size="12" text-anchor="end" font-weight="normal" font-family='"Liberation Sans", sans-serif'>8.00</text>
<text x="1120" y="432" fill="#ff3232" font-size="12" text-anchor="end" font-weight="normal" font-family='"Liberation Sans", sans-serif'>100.0</text>
<text x="1120" y="471" fill="#ff3232" font-size="12" text-anchor="end" font-weight="normal" font-family='"Liberation Sans", sans-serif'>80.00</text>
<text x="1120" y="510" fill="#ff3232" font-size="12" text-anchor="end" font-weight="normal" font-family='"Liberation Sans", sans-serif'>60.00</text>
<text x="1120" y="548" fill="#ff3232" font-size="12" text-anchor="end" font-weight="normal" font-family='"Liberation Sans", sans-serif'>40.00</text>
<text x="1120" y="587" fill="#ff3232" font-size="12" text-anchor="end" font-weight="normal" font-family='"Liberation Sans", sans-serif'>20.00</text>
<text x="1077" y="520" fill="#e0e0e0" font-size="12" text-anchor="start" font-weight="normal" font-family='"Liberation Sans", sans-serif'>50.50</text>
<text x="18" y="409" fill="#c0c0c0" font-size="12" text-anchor="start" font-weight="normal" font-family='"Liberation Sans", sans-serif'>股朋指标网</text>
<text x="83" y="409" fill="#ffffff" font-size="12" text-anchor="start" font-weight="normal" font-family='"Liberation Sans", sans-serif'>K: 82.00</text>
<text x="134" y="409" fill="#ffff00" font-size="12" text-anchor="start" font-weight="normal" font-family='"Liberation Sans", sans-serif'>D: 70.10</text>
<text x="184" y="409" fill="#ff00ff" font-size="12" text-anchor="start" font-weight="normal" font-family='"Liberation Sans", sans-serif'>J: 105.81</text>
<text x="3" y="643" fill="#ff3232" font-size="12" text-anchor="start" font-weight="normal" font-family='"Liberation Sans", sans-serif'>2025年</text>
<text x="119" y="643" fill="#ff3232" font-size="12" text-anchor="start" font-weight="normal" font-family='"Liberation Sans", sans-serif'>7</text>
<text x="295" y="643" fill="#ff3232" font-size="12" text-anchor="start" font-weight="normal" font-family='"Liberation Sans", sans-serif'>8</text>
<text x="456" y="643" fill="#ff3232" font-size="12" text-anchor="start" font-weight="normal" font-family='"Liberation Sans", sans-serif'>9</text>
<text x="625" y="643" fill="#ff3232" font-size="12" text-anchor="start" font-weight="normal" font-family='"Liberation Sans", sans-serif'>10</text>
<text x="755" y="643" fill="#ff3232" font-size="12" text-anchor="start" font-weight="normal" font-family='"Liberation Sans", sans-serif'>11</text>
<text x="909" y="643" fill="#ff3232" font-size="12" text-anchor="start" font-weight="normal" font-family='"Liberation Sans", sans-serif'>12</text>
</g>
</svg>
<div id="wm"><div class="a">股朋指标网</div><div class="b">www.7gpzb.com</div></div>
</body></html>
